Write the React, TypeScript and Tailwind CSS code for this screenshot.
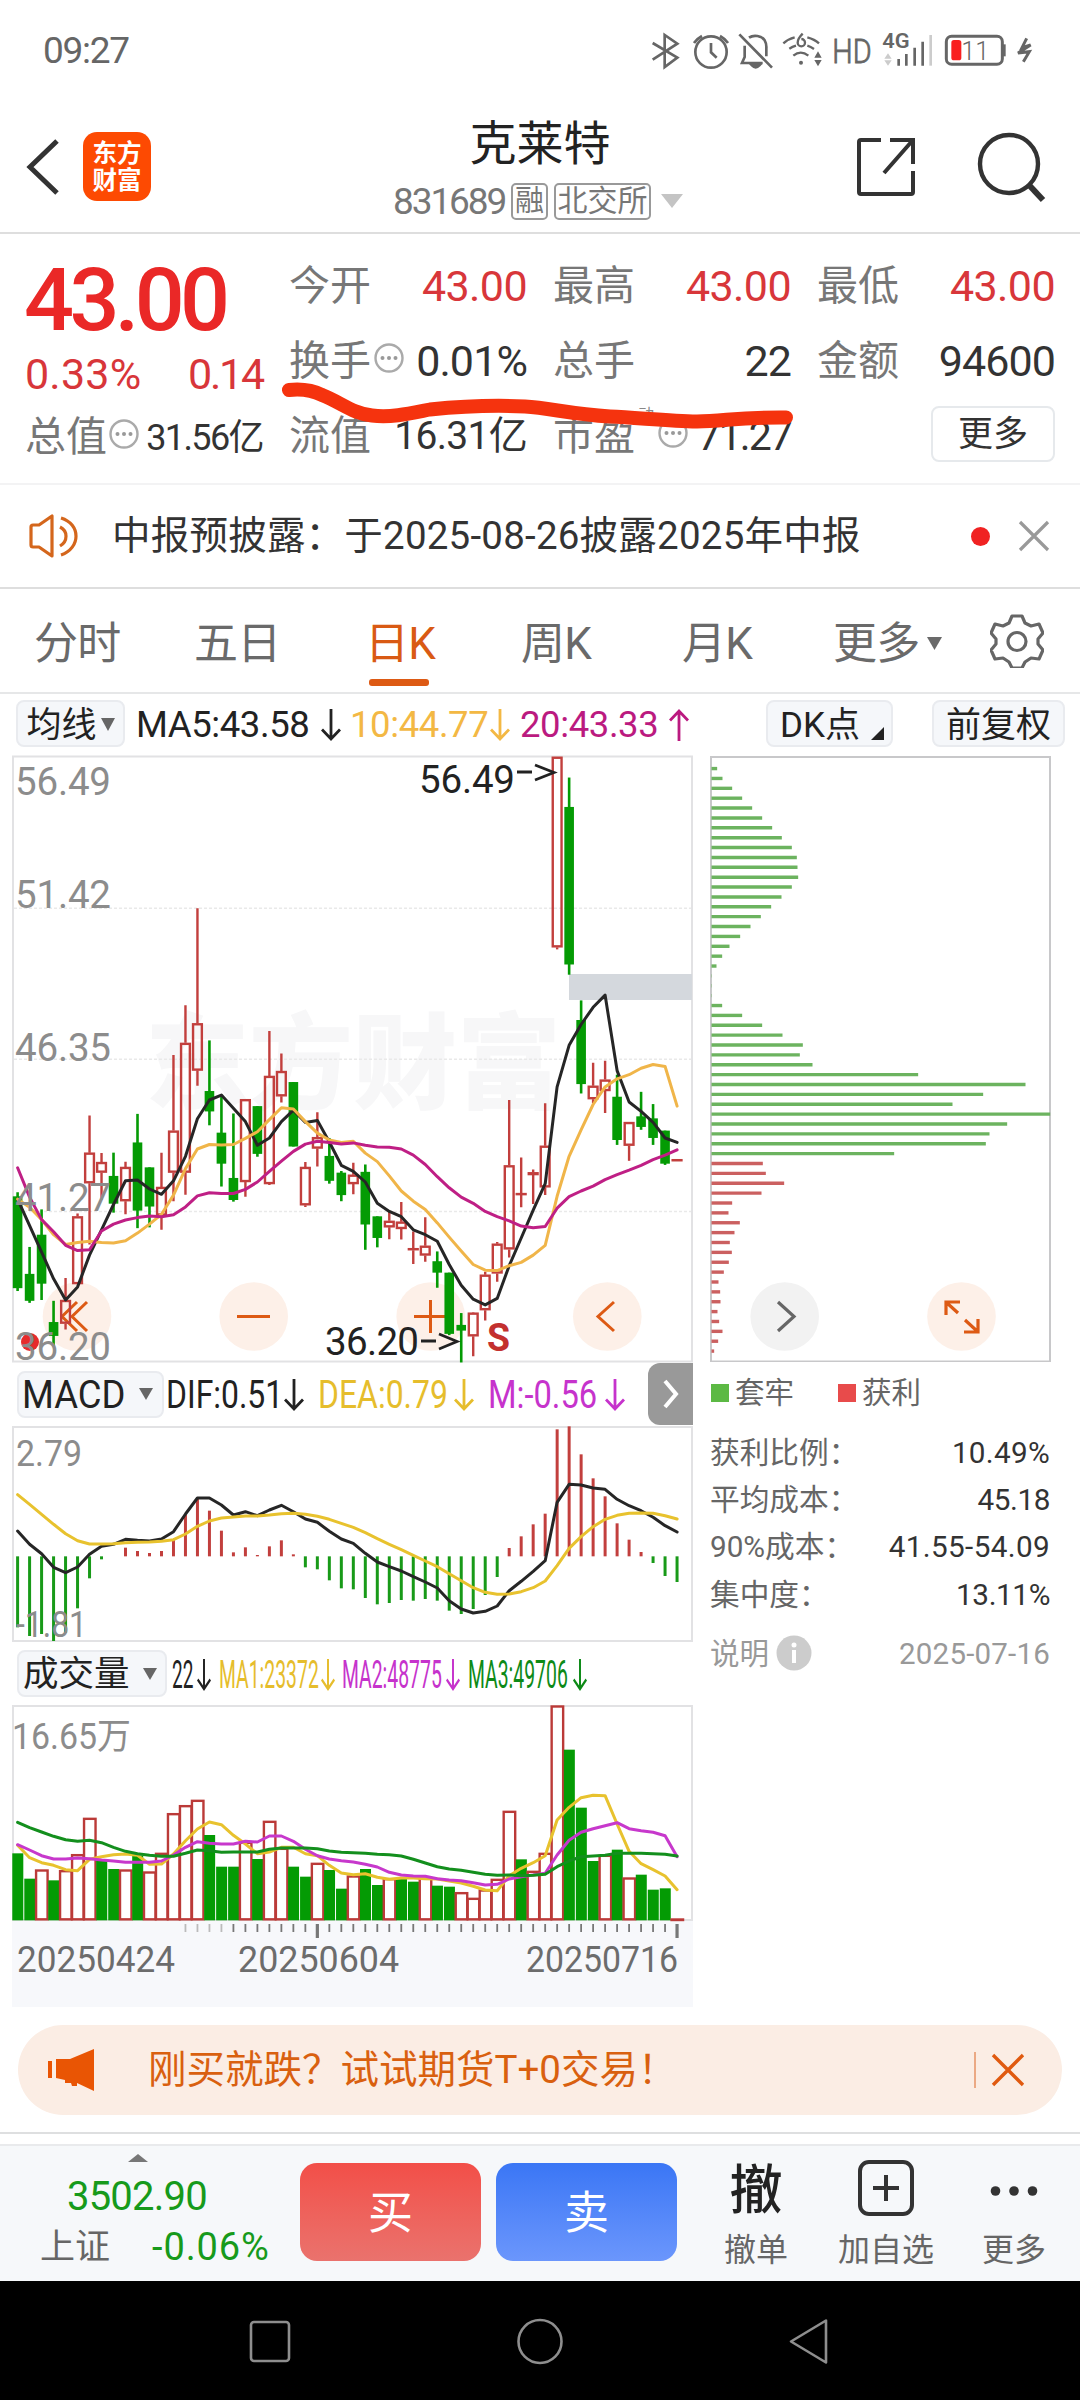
import React from "react";

type Candle = [up: 0 | 1, high: number, top: number, bottom: number, low: number];

const CANDLES: Candle[] = [
  [0, 1108, 1118, 1343, 1350], [0, 1242, 1308, 1374, 1379], [0, 1150, 1212, 1332, 1372], [0, 1374, 1426, 1460, 1485],
  [1, 1318, 1372, 1430, 1444], [1, 1160, 1167, 1333, 1333], [1, 920, 1011, 1086, 1236], [1, 1012, 1034, 1060, 1126],
  [0, 1011, 1068, 1136, 1158], [1, 1033, 1046, 1130, 1162], [0, 916, 986, 1153, 1196], [0, 1047, 1047, 1143, 1194],
  [1, 1011, 1095, 1165, 1200], [1, 772, 957, 1060, 1130], [1, 650, 742, 1060, 1114], [1, 412, 694, 810, 847],
  [0, 736, 860, 910, 944], [0, 872, 962, 1038, 1094], [0, 915, 1073, 1127, 1131], [1, 880, 880, 1083, 1119],
  [0, 897, 897, 1014, 1021], [1, 713, 823, 1088, 1090], [1, 768, 811, 873, 888], [0, 838, 838, 996, 996],
  [1, 1034, 1046, 1140, 1144], [1, 912, 973, 1001, 1045], [0, 975, 1019, 1080, 1087], [0, 1056, 1060, 1115, 1130],
  [1, 1036, 1065, 1088, 1113], [0, 1040, 1058, 1187, 1249], [0, 1167, 1167, 1220, 1243], [1, 1155, 1178, 1194, 1223],
  [1, 1132, 1180, 1198, 1224], [1, 1204, 1245, 1250, 1284], [1, 1169, 1239, 1263, 1278], [0, 1253, 1277, 1305, 1342],
  [0, 1305, 1305, 1455, 1458], [0, 1404, 1433, 1447, 1525], [1, 1402, 1403, 1461, 1510], [1, 1303, 1310, 1397, 1422],
  [1, 1230, 1234, 1307, 1327], [1, 882, 1042, 1248, 1268], [1, 1023, 1110, 1115, 1145], [1, 1052, 1059, 1066, 1137],
  [1, 890, 994, 1096, 1115], [1, 41, 41, 508, 513], [0, 92, 164, 550, 575], [0, 638, 686, 843, 866],
  [1, 791, 847, 880, 890], [1, 786, 832, 860, 914], [0, 820, 874, 980, 992], [1, 936, 936, 994, 1031],
  [0, 862, 922, 948, 955], [0, 892, 927, 975, 992], [0, 957, 957, 1038, 1041], [1, 1027, 1027, 1029, 1029],
];
const MA5 = [1125, 1190, 1255, 1320, 1372, 1340, 1262, 1200, 1138, 1080, 1078, 1100, 1113, 1080, 1020, 928, 882, 870, 902, 935, 993, 975, 935, 907, 937, 932, 985, 1042, 1057, 1083, 1135, 1155, 1168, 1200, 1212, 1228, 1285, 1336, 1370, 1384, 1368, 1288, 1220, 1152, 1087, 850, 748, 697, 655, 625, 810, 887, 910, 937, 975, 986];
const MA10 = [1125, 1145, 1175, 1212, 1236, 1231, 1228, 1231, 1232, 1227, 1208, 1186, 1162, 1115, 1050, 1002, 991, 992, 991, 976, 960, 930, 901, 904, 935, 963, 980, 986, 983, 1012, 1033, 1068, 1105, 1130, 1150, 1183, 1218, 1252, 1285, 1299, 1300, 1288, 1280, 1262, 1238, 1118, 1020, 955, 893, 850, 830, 820, 804, 795, 800, 897];
const MA20 = [1048, 1120, 1175, 1205, 1238, 1251, 1249, 1203, 1186, 1176, 1170, 1166, 1168, 1163, 1144, 1117, 1109, 1111, 1111, 1101, 1083, 1057, 1032, 1008, 990, 983, 986, 990, 987, 993, 997, 998, 1002, 1017, 1040, 1070, 1097, 1120, 1135, 1155, 1168, 1178, 1191, 1195, 1192, 1147, 1119, 1105, 1093, 1077, 1065, 1054, 1042, 1028, 1017, 1004];

const MACD_BARS = [802, 828, 822, 843, 818, 745, 655, 598, 589, 563, 573, 579, 573, 539, 465, 417, 452, 512, 577, 562, 585, 559, 541, 583, 622, 628, 661, 685, 688, 714, 733, 729, 720, 722, 717, 722, 752, 762, 747, 705, 651, 564, 529, 493, 461, 208, 199, 283, 355, 409, 490, 539, 576, 609, 648, 666];
const DIF = [513, 553, 581, 622, 638, 621, 583, 559, 553, 538, 541, 543, 537, 515, 462, 414, 414, 435, 465, 455, 467, 450, 436, 455, 477, 487, 514, 537, 550, 580, 606, 620, 633, 650, 666, 684, 722, 747, 759, 754, 738, 692, 664, 634, 602, 427, 373, 375, 384, 388, 418, 437, 452, 472, 497, 516];
const DEA = [404, 433, 463, 493, 521, 542, 552, 552, 551, 548, 547, 546, 544, 539, 522, 499, 483, 474, 471, 468, 468, 465, 461, 460, 463, 469, 478, 490, 502, 518, 536, 553, 569, 586, 603, 620, 641, 662, 683, 697, 703, 702, 695, 683, 663, 617, 565, 530, 500, 478, 466, 460, 459, 460, 467, 477];

const VOL: [0 | 1, number][] = [
  [0, 520], [0, 596], [1, 570], [0, 601], [1, 572], [1, 524], [1, 415], [0, 540], [0, 567], [1, 570], [0, 527], [1, 576], [1, 520], [1, 401],
  [1, 377], [1, 361], [0, 465], [0, 560], [0, 560], [1, 487], [0, 537], [1, 424], [1, 505], [0, 560], [0, 590], [1, 550], [0, 570], [0, 626],
  [1, 588], [0, 567], [0, 615], [1, 596], [0, 594], [0, 605], [1, 595], [0, 617], [0, 620], [1, 638], [1, 655], [1, 630], [1, 598], [1, 394],
  [0, 538], [1, 574], [1, 520], [1, 78], [0, 209], [0, 383], [0, 543], [1, 526], [0, 509], [1, 594], [0, 584], [0, 629], [0, 625], [1, 717],
];
const VMA1 = [496, 533, 548, 556, 569, 572, 538, 530, 524, 522, 526, 553, 552, 522, 482, 447, 426, 434, 466, 492, 521, 516, 502, 502, 521, 527, 556, 579, 584, 581, 592, 598, 594, 594, 596, 597, 603, 609, 619, 630, 632, 587, 565, 548, 527, 420, 382, 353, 346, 347, 432, 514, 551, 569, 588, 629];
const VMA2 = [494, 510, 527, 537, 537, 534, 536, 540, 543, 547, 547, 547, 543, 525, 502, 485, 490, 492, 492, 484, 486, 468, 468, 484, 508, 527, 537, 542, 546, 553, 561, 577, 585, 588, 589, 596, 600, 602, 608, 615, 613, 597, 590, 585, 580, 525, 481, 457, 446, 437, 428, 446, 452, 457, 467, 530];
const VMA3 = [427, 443, 456, 469, 479, 484, 481, 488, 502, 514, 521, 526, 529, 529, 520, 510, 512, 517, 516, 516, 516, 508, 504, 504, 504, 506, 513, 517, 518, 520, 523, 524, 528, 538, 549, 560, 567, 571, 577, 583, 586, 585, 587, 586, 583, 560, 543, 530, 528, 526, 520, 520, 520, 521, 523, 528];

const CHIPS = [17, 33, 62, 92, 122, 152, 182, 211, 241, 256, 258, 260, 241, 210, 179, 148, 117, 86, 54, 32, 15, 1, 1, 1, 32, 92, 152, 213, 274, 265, 303, 620, 942, 815, 723, 1016, 887, 834, 823, 548, 154, 163, 218, 150, 62, 51, 85, 69, 55, 61, 52, 37, 21, 26, 27, 18, 23, 33, 20, 8];

const dayX = (i: number) => 17.6 + i * 11.99;
const priceY = (v: number) => 740 + v / 2.45;
const macdY = (v: number) => 1360 + v / 3;
const volY = (v: number) => 1680 + v / 3;
const line = (vals: number[], y: (v: number) => number) =>
  vals.map((v, i) => `${dayX(i).toFixed(1)},${y(v).toFixed(1)}`).join(" ");

const RED = "#c23f3d";
const GREEN = "#049b04";

function Curve({ d, y, c }: { d: number[]; y: (v: number) => number; c: string }) {
  return <polyline points={line(d, y)} fill="none" stroke={c} strokeWidth={3} strokeLinejoin="round" strokeLinecap="round" />;
}

function Dots() {
  return (
    <svg className="h-[30px] w-[30px] shrink-0" viewBox="0 0 30 30" fill="none" stroke="#aaa" strokeWidth={2.4}>
      <circle cx="15" cy="15" r="13.5" />
      <g fill="#999" stroke="none">
        <circle cx="8.5" cy="15" r="2" /><circle cx="15" cy="15" r="2" /><circle cx="21.5" cy="15" r="2" />
      </g>
    </svg>
  );
}

function Arrow({ up = false }: { up?: boolean }) {
  return (
    <svg className="h-[34px] w-[20px] shrink-0" viewBox="0 0 20 34" fill="none" stroke="currentColor" strokeWidth={2.8}>
      {up ? <path d="M10 33V3M1 12.5 10 3l9 9.5" /> : <path d="M10 1v30M1 21.5 10 31l9-9.5" />}
    </svg>
  );
}

function Caret({ className }: { className: string }) {
  return (
    <svg className={className} viewBox="0 0 14 13" preserveAspectRatio="none" fill="currentColor"><path d="M0 0h14L7 13z" /></svg>
  );
}

function StatusBar() {
  return (
    <div className="flex h-[101px] shrink-0 items-center pl-[43px] text-[#666]">
      <span className="w-[587px] text-[37px] leading-none tracking-[-1.3px]">09:27</span>
      <svg className="h-[60px] w-[420px]" viewBox="0 0 1260 180" fill="none" stroke="currentColor" strokeWidth={8}>
        <path d="M68 66l74 44-38 28V42l38 26-74 48" strokeLinejoin="miter" />
        <circle cx="243" cy="93" r="47" />
        <path d="M243 66v28l17 16M192 66q8-12 24-21M294 66q-8-12-24-21" />
        <path d="M328 40 426 140M344 74v34l-8 18h62M357 50c14-10 38-6 47 8q6 10 5 24v24" />
        <path d="M366 133h22q-11 12-22 0z" fill="currentColor" />
        <path d="M460 67q14-13 34-18M478 83q9-6 20-9M532 49q22 6 35 18M532 74q10 3 20 10M490 104q22-18 45 0M518 38q-15 15-15 27a11 11 0 1 0 11-11" strokeWidth={7} />
        <circle cx="513" cy="125" r="6" fill="currentColor" stroke="none" />
        <path d="M564 91l11 19h-22zM564 136l-11-19h22z" fill="currentColor" stroke="none" />
        <text x="607" y="125" fontSize="98" fontWeight="300" fill="currentColor" strokeWidth={2.5} textLength="118" lengthAdjust="spacingAndGlyphs">HD</text>
        <text x="757" y="80" fontSize="60" fontWeight="600" fill="currentColor" stroke="none" textLength="82" lengthAdjust="spacingAndGlyphs">4G</text>
        <path d="M806 134v-20M829 134V99M854 134V80M878 134V62" />
        <path d="M902 134V42" stroke="#ccc" />
        <path d="M774 97l11 16h-22zM774 134l-11-16h22z" fill="#ccc" stroke="none" />
        <rect x="949" y="46" width="168" height="84" rx="16" strokeWidth={9} />
        <path d="M1122 70v36" strokeWidth={10} />
        <rect x="964" y="57" width="30" height="61" rx="8" fill="#f91f1f" stroke="none" />
        <text x="994" y="116" fontSize="76" fontWeight="300" fill="currentColor" stroke="none" textLength="84">11</text>
        <path d="M1190 52l-14 28 26-8-38 24 34-4-18 30" strokeWidth={9} />
      </svg>
    </div>
  );
}

function Header() {
  return (
    <div className="grid h-[133px] shrink-0 grid-cols-[393px_294px_1fr] border-b-2 border-[#dedede]">
      <div className="flex items-center pl-[25px]">
        <svg className="h-[58px] w-[36px]" viewBox="0 0 36 58" fill="none" stroke="#333" strokeWidth={5}><path d="M32 3 5 29l27 26" /></svg>
        <div className="ml-[22px] flex h-[69px] w-[68px] flex-col items-center justify-center rounded-[14px] bg-[#fd4a02] text-[24.5px] leading-[27px] font-bold text-white">
          <span>东方</span>
          <span>财富</span>
        </div>
      </div>
      <div className="flex flex-col">
        <div className="mt-[18px] text-center text-[47px] leading-[50px] text-[#222]">克莱特</div>
        <div className="mt-[12px] flex h-[40px] items-center text-[#777]">
          <span className="w-[118px] text-[37px] leading-none tracking-[-2.1px]">831689</span>
          <span className="flex h-[37px] w-[37px] items-center justify-center rounded-[5px] border-2 border-[#999] text-[29px] leading-none">融</span>
          <span className="ml-[6px] flex h-[37px] w-[97px] items-center justify-center rounded-[5px] border-2 border-[#999] text-[30px] leading-none">北交所</span>
          <Caret className="ml-[10px] h-[14px] w-[22px] text-[#c4c4c4]" />
        </div>
      </div>
      <div className="flex items-center">
        <svg className="ml-[168px] h-[62px] w-[62px]" viewBox="0 0 62 62" fill="none" stroke="#333" strokeWidth={4}>
          <path d="M26 4H6q-2 0-2 2v50q0 2 2 2h50q2 0 2-2V35M35 4h23v24M58 4 29 37" />
        </svg>
        <svg className="ml-[58px] h-[72px] w-[72px]" viewBox="0 0 72 72" fill="none" stroke="#333" strokeWidth={4.4}>
          <circle cx="34" cy="33" r="29" /><path d="M54 54 68 69" strokeWidth={6} />
        </svg>
      </div>
    </div>
  );
}

function Cell({ label, value, dots, tone = "text-[43px] tracking-[-0.9px] text-[#333]" }: { label: string; value: string; dots?: boolean; tone?: string }) {
  return (
    <div className="flex h-[75px] items-center justify-between leading-none whitespace-nowrap">
      <span className="flex items-center gap-[3px] text-[41px] text-[#777]">{label}{dots && <span className="-mt-[8px]"><Dots /></span>}</span>
      <span className={tone}>{value}</span>
    </div>
  );
}

function Quote() {
  const red = "text-[43px] tracking-[-0.6px] text-[#d8363a]";
  return (
    <div className="relative grid h-[251px] shrink-0 grid-cols-4 gap-x-[26px] border-b-2 border-[#f3f3f4] px-[25px] pt-[15px]">
      <div>
        <div className="-ml-px flex h-[99px] items-center pt-[3px] text-[88px] leading-none font-medium tracking-[-4.6px] text-[#ea2827]">43.00</div>
        <div className="flex h-[52px] items-center justify-between text-[43px] leading-none text-[#d8363a]">
          <span className="tracking-[0.2px]">0.33%</span><span className="tracking-[-2.2px]">0.14</span>
        </div>
        <div className="flex h-[75px] items-center leading-none whitespace-nowrap text-[#333]">
          <span className="text-[41px] text-[#777]">总值</span>
          <span className="-mt-[8px] ml-[2px]"><Dots /></span>
          <span className="ml-auto text-[36px] tracking-[-1.6px]">31.56亿</span>
        </div>
      </div>
      <div>
        <Cell label="今开" value="43.00" tone={red} />
        <Cell label="换手" value="0.01%" dots />
        <Cell label="流值" value="16.31亿" tone="text-[39px] tracking-[-0.7px] text-[#333]" />
      </div>
      <div>
        <Cell label="最高" value="43.00" tone={red} />
        <Cell label="总手" value="22" />
        <div className="flex h-[75px] items-center leading-none text-[#333]">
          <span className="text-[41px] text-[#777]">市盈</span>
          <span className="mb-[44px] w-[23px] pl-[3px] text-[16px] text-[#888]">动</span>
          <span className="-mt-[8px]"><Dots /></span>
          <span className="ml-auto text-[41px] tracking-[-1.9px]">71.27</span>
        </div>
      </div>
      <div>
        <Cell label="最低" value="43.00" tone={red} />
        <Cell label="金额" value="94600" />
        <div className="flex h-[70px] items-center justify-end">
          <div className="flex h-[56px] w-[124px] items-center justify-center rounded-[8px] border-2 border-[#e6e9ec] text-[35px] leading-none text-[#333]">更多</div>
        </div>
      </div>
      <svg className="absolute top-[140px] left-[270px] h-[60px] w-[540px]" viewBox="270 374 540 60" fill="none" stroke="#f5330e" strokeWidth={14} strokeLinecap="round" strokeLinejoin="round">
        <path d="M289 390Q308 388 322 395C342 403 352 413 372 415.5 392 418 412 413 430 409.5 465 406 495 405 525 406.5 550 408 570 414 610 416.5 640 418 670 421 697 421.5 725 421 740 417 786 417.5" />
      </svg>
    </div>
  );
}

function Notice() {
  return (
    <div className="flex h-[104px] shrink-0 items-center border-b-2 border-[#dedede] pl-[28px]">
      <svg className="h-[46px] w-[54px]" viewBox="0 0 54 46" fill="none" stroke="#d4661c" strokeWidth={3.2} strokeLinejoin="round">
        <path d="M24 3v40L11 34H5q-2 0-2-2V14q0-2 2-2h6zM33 5c20 6 20 30 0 37M32 14c8 4 8 14 0 19" />
      </svg>
      <span className="ml-[30px] w-[859px] pt-px text-[38.5px] leading-none tracking-[0.22px] text-[#333]">中报预披露：于2025-08-26披露2025年中报</span>
      <span className="h-[19px] w-[19px] rounded-full bg-[#f02222]" />
      <svg className="ml-[28px] h-[32px] w-[32px]" viewBox="0 0 32 32" stroke="#999" strokeWidth={3.2}><path d="M2 2l28 28M30 2 2 30" /></svg>
    </div>
  );
}

function Tabs() {
  return (
    <div className="grid h-[105px] shrink-0 grid-cols-[160px_174px_153px_161px_151px_159px_1fr] items-center border-b-2 border-[#e6e7e8] pt-[6px] pl-[34px] text-[44px] leading-none tracking-[-0.8px] text-[#6a6a6a]">
      <span>分时</span>
      <span>五日</span>
      <span className="relative -ml-[3px] text-[#d95a14]">
        日K
        <i className="absolute top-[57px] left-[4px] h-[7px] w-[60px] rounded-[3px] bg-[#dd5a14]" />
      </span>
      <span>周K</span>
      <span>月K</span>
      <span className="flex items-center">更多<Caret className="ml-[8px] h-[13px] w-[15px]" /></span>
      <svg className="-mt-[6px] -ml-[2px] h-[54px] w-[54px]" viewBox="0 0 54 54" fill="none" stroke="#666" strokeWidth={3.2} strokeLinejoin="round">
        <path d="M22 2h10l3 7 6 3 8-2 4 9-5 6v5l5 6-4 9-8-1-6 4-3 6H22l-3-6-6-4-8 1-4-9 5-6v-5L1 19l4-9 8 2 6-3z" />
        <circle cx="27" cy="27.5" r="9" />
      </svg>
    </div>
  );
}

function Toolbar() {
  const pill = "flex h-[47px] items-center rounded-[8px] border-2 border-[#e9ebef] bg-[#f5f7fa] pt-[3px] text-[35px] leading-none text-[#222]";
  return (
    <div className="flex h-[59px] shrink-0 items-center pl-[16px] text-[36.5px] leading-none">
      <div className={pill + " w-[109px] justify-center"}>均线<Caret className="mb-[2px] ml-[4px] h-[13px] w-[14px] text-[#666]" /></div>
      <div className="flex w-[641px] items-center pt-[3px] pl-[11px] tracking-[-0.4px]">
        <span className="flex w-[214px] items-center justify-between pr-[9px] text-[#222]">MA5:43.58<Arrow /></span>
        <span className="flex w-[170px] items-center justify-between pr-[10px] text-[#f3b844]">10:44.77<Arrow /></span>
        <span className="flex w-[169px] items-center justify-between text-[#bb1a80]">20:43.33<Arrow up /></span>
      </div>
      <div className={pill + " w-[127px] pl-[12px]"}>
        DK点
        <svg className="mt-[16px] ml-[11px] h-[13px] w-[13px]" viewBox="0 0 13 13" fill="#222"><path d="M13 0v13H0z" /></svg>
      </div>
      <div className={pill + " ml-[39px] w-[133px] justify-center"}>前复权</div>
    </div>
  );
}

function PriceChart() {
  const labels: [string, number][] = [["56.49", 795], ["51.42", 908], ["46.35", 1061], ["41.27", 1211], ["36.20", 1360]];
  return (
    <svg className="h-[609px] w-[681px] overflow-visible" viewBox="12 753 681 609">
      <rect x="13" y="756.5" width="679" height="605" fill="none" stroke="#e2e2e4" strokeWidth={2} />
      <text x="145" y="1101" fontSize="104" fontWeight="800" fill="#f7f7f8">东方财富</text>
      {[412, 782, 1155].map((v) => (
        <line key={v} x1="14" x2="691" y1={priceY(v)} y2={priceY(v)} stroke="#e9e9e9" strokeWidth={1.5} strokeDasharray="3 2" />
      ))}
      <rect x="569" y="974" width="123" height="26" fill="#d4d8dd" />
      {[77, 253.7, 430.7, 607.3].map((x) => <circle key={x} cx={x} cy="1316.5" r="34.3" fill="#fdf0e8" />)}
      <g fill="none" stroke="#dd5a14" strokeWidth={3}>
        <path d="M77 1302 62 1316.5 77 1331M87 1302 72 1316.5 87 1331M237 1316.5h33M414 1316.5h33M430.5 1300v33M614 1302 598 1316.5 614 1331" />
      </g>
      {CANDLES.map(([up, h, t, b, l], i) => {
        const x = dayX(i);
        const top = priceY(t);
        const bh = Math.max(priceY(b) - top, 1);
        return up ? (
          <g key={i} stroke={RED} strokeWidth={2.4} fill="none">
            <path d={`M${x} ${priceY(h)}V${top}M${x} ${top + bh}V${priceY(l)}`} />
            <rect x={x - 4.4} y={top + 1} width={8.8} height={Math.max(bh - 2, 0.1)} />
          </g>
        ) : (
          <g key={i} fill={GREEN}>
            <rect x={x - 1.3} y={priceY(h)} width={2.6} height={priceY(l) - priceY(h)} />
            <rect x={x - 4.8} y={top} width={9.6} height={bh} />
          </g>
        );
      })}
      <Curve d={MA5} y={priceY} c="#262626" />
      <Curve d={MA10} y={priceY} c="#f0b549" />
      <Curve d={MA20} y={priceY} c="#bf1f85" />
      <circle cx="30" cy="1342" r="9" fill="#e62b2b" />
      <g fontSize="38.5" fill="#8c8c8c">
        {labels.map(([s, y]) => <text key={s} x="15" y={y} textLength="96">{s}</text>)}
      </g>
      <g fontSize="38.5" fill="#222">
        <text x="419" y="793" textLength="96">56.49</text>
        <path d="M517 772h15M535 765l19 7.5-19 7.5" fill="none" stroke="#222" strokeWidth={2.8} />
        <text x="325" y="1355" textLength="94">36.20</text>
        <path d="M421 1341h15M439 1334l18 7.5-18 7.5" fill="none" stroke="#222" strokeWidth={2.8} />
      </g>
      <text x="487" y="1351" fontSize="39" fontWeight="700" fill="#c3302f" textLength="23" lengthAdjust="spacingAndGlyphs">S</text>
    </svg>
  );
}

function MacdHeader() {
  return (
    <div className="flex h-[64px] items-center pl-[5px] text-[38px] leading-none">
      <div className="flex h-[47px] w-[147px] shrink-0 items-center rounded-[8px] border-2 border-[#e9ebef] bg-[#f5f7fa] pt-[2px] pl-[3px] text-[#222]">
        <span className="w-[103px] origin-left scale-x-[0.960]">MACD</span><Caret className="mb-[2px] ml-[14px] h-[12px] w-[14px] shrink-0 text-[#666]" />
      </div>
      <div className="flex w-[484px] items-center pt-[2px] pl-[2px]">
        <span className="flex w-[138px] items-center justify-between text-[#222]"><span className="w-[114px] origin-left scale-x-[0.840]">DIF:0.51</span><Arrow /></span>
        <span className="ml-[14px] flex w-[156px] items-center justify-between text-[#e6bd2c]"><span className="w-[128px] origin-left scale-x-[0.840]">DEA:0.79</span><Arrow /></span>
        <span className="ml-[14px] flex w-[137px] items-center justify-between text-[#c633cc]"><span className="w-[110px] origin-left scale-x-[0.860]">M:-0.56</span><Arrow /></span>
      </div>
      <div className="flex h-[62px] w-[45px] items-center justify-center rounded-l-[12px] bg-[#999]">
        <svg className="h-[30px] w-[18px]" viewBox="0 0 18 30" fill="none" stroke="#fff" strokeWidth={4}><path d="M3 2l11 13L3 28" /></svg>
      </div>
    </div>
  );
}

function MacdChart() {
  return (
    <svg className="h-[216px] w-[681px] overflow-visible" viewBox="12 1426 681 216">
      <rect x="13" y="1427" width="679" height="214" fill="none" stroke="#e2e2e4" strokeWidth={2} />
      {MACD_BARS.map((v, i) => (
        <line key={i} x1={dayX(i)} x2={dayX(i)} y1={macdY(589)} y2={macdY(v)} stroke={v < 589 ? RED : "#189a18"} strokeWidth={3} />
      ))}
      <Curve d={DIF} y={macdY} c="#262626" />
      <Curve d={DEA} y={macdY} c="#e8c22e" />
      <g fontSize="37" fill="#8c8c8c">
        <text x="16" y="1466" textLength="66" lengthAdjust="spacingAndGlyphs">2.79</text>
        <text x="16" y="1637" textLength="71" lengthAdjust="spacingAndGlyphs">-1.81</text>
      </g>
    </svg>
  );
}

function VolumeHeader() {
  const items: [string, string, string][] = [
    ["MA1:23372", "w-[123px] text-[#e6bd2c]", "w-[99px]"],
    ["MA2:48775", "w-[126px] text-[#c633cc]", "w-[101px]"],
    ["MA3:49706", "w-[121px] text-[#0d8a17]", "w-[102px]"],
  ];
  return (
    <div className="flex h-[63px] items-center pl-[5px] text-[38px] leading-none">
      <div className="flex h-[47px] w-[150px] shrink-0 items-center rounded-[8px] border-2 border-[#e9ebef] bg-[#f5f7fa] pt-[2px] pl-[4px] text-[35.5px] text-[#222]">
        成交量<Caret className="mb-[2px] ml-[13px] h-[12px] w-[14px] text-[#666]" />
      </div>
      <span className="ml-[5px] flex w-[47px] items-center pt-[2px] text-[#222]"><span className="w-[22px] origin-left scale-x-[0.500]">22</span><span className="scale-x-[0.700]"><Arrow /></span></span>
      {items.map(([t, c, w]) => (
        <span key={t} className={"flex items-center pt-[2px] " + c}>
          <span className={"shrink-0 origin-left scale-x-[0.510] " + w}>{t}</span>
          <span className="scale-x-[0.700]"><Arrow /></span>
        </span>
      ))}
    </div>
  );
}

function VolumeChart() {
  const base = volY(718);
  return (
    <svg className="h-[302px] w-[681px]" viewBox="12 1705 681 302">
      <rect x="12" y="1921" width="681" height="86" fill="#f7f8fb" />
      <rect x="13" y="1706" width="679" height="214" fill="none" stroke="#e2e2e4" strokeWidth={2} />
      {VOL.map(([up, v], i) =>
        up ? (
          <rect key={i} x={dayX(i) - 5.5} y={volY(v) + 0.5} width={11.5} height={Math.max(base - volY(v) - 0.5, 0.5)} fill="#fff" stroke="#bb3a38" strokeWidth={2.4} />
        ) : (
          <rect key={i} x={dayX(i) - 5.3} y={volY(v)} width={11} height={base - volY(v) + 1} fill={GREEN} />
        ),
      )}
      <Curve d={VMA1} y={volY} c="#e8c22e" />
      <Curve d={VMA2} y={volY} c="#c738cc" />
      <Curve d={VMA3} y={volY} c="#138f1d" />
      {Array.from({ length: 42 }, (_, k) => k + 14).map((i) => (
        <line key={i} x1={dayX(i)} x2={dayX(i)} y1="1924" y2={i === 25 || i === 55 ? 1938 : 1932} stroke={i < 18 ? "#bbb" : "#777"} strokeWidth={i === 25 || i === 55 ? 3.2 : 1.8} />
      ))}
      <text x="12" y="1749" fontSize="36" fill="#8c8c8c" textLength="119" lengthAdjust="spacingAndGlyphs">16.65万</text>
      <g fontSize="36" fill="#6c6c6c">
        <text x="17" y="1972" textLength="158" lengthAdjust="spacingAndGlyphs">20250424</text>
        <text x="238" y="1972" textLength="161" lengthAdjust="spacingAndGlyphs">20250604</text>
        <text x="526" y="1972" textLength="152" lengthAdjust="spacingAndGlyphs">20250716</text>
      </g>
    </svg>
  );
}

function ChipPanel() {
  const rows = [
    ["获利比例：", "10.49%", "tracking-[0.3px]"],
    ["平均成本：", "45.18", "tracking-[-0.4px]"],
    ["90%成本：", "41.55-54.09", "tracking-[0.35px]"],
    ["集中度：", "13.11%", "tracking-[-0.4px]"],
  ];
  return (
    <div className="w-[341px]">
      <svg className="h-[609px] w-[341px]" viewBox="710 753 341 609">
        <rect x="711" y="757" width="339" height="604.5" fill="none" stroke="#c8c8ca" strokeWidth={2} />
        {CHIPS.map((w, k) => {
          const y = priceY(70 + k * 24.19);
          return <line key={k} x1="711.5" x2={711.5 + w / 3} y1={y} y2={y} stroke={k < 40 ? "#6cb35f" : "#cb6060"} strokeWidth={3.4} />;
        })}
        <circle cx="784.7" cy="1316.5" r="34.3" fill="#f2f2f2" />
        <circle cx="961.5" cy="1316.5" r="34.3" fill="#fdf0e8" />
        <path d="M778 1302l16 14.5-16 14.5" fill="none" stroke="#666" strokeWidth={3.2} />
        <path d="M946 1315v-13h14M947 1303l11 10M978 1319v13h-14M977 1331l-12-11" fill="none" stroke="#dd5a14" strokeWidth={3.2} />
      </svg>
      <div className="flex h-[62px] items-center text-[29.5px] leading-none text-[#666]">
        <i className="ml-px h-[18px] w-[18px] bg-[#5cb944]" /><span className="ml-[6px] w-[103px] pt-[2px]">套牢</span>
        <i className="h-[18px] w-[18px] bg-[#e84b4b]" /><span className="ml-[6px] pt-[2px]">获利</span>
      </div>
      <div className="mt-[5px]">
        {rows.map(([a, b, spacing]) => (
          <div key={a} className="flex h-[47.3px] items-center justify-between pr-[1px] text-[29.7px] leading-none">
            <span className="whitespace-nowrap text-[#666]">{a}</span>
            <span className={"text-[#333] " + spacing}>{b}</span>
          </div>
        ))}
      </div>
      <div className="mt-[10px] flex h-[50px] items-center pr-[1px] text-[29.5px] leading-none text-[#999]">
        <span className="pt-[3px]">说明</span>
        <svg className="ml-[7px] h-[36px] w-[36px]" viewBox="0 0 36 36"><circle cx="18" cy="18" r="17.5" fill="#ccc" /><path d="M18 15v13" stroke="#fff" strokeWidth={4} /><circle cx="18" cy="10" r="2.5" fill="#fff" /></svg>
        <span className="ml-auto pt-[3px] tracking-[0.2px]">2025-07-16</span>
      </div>
    </div>
  );
}

function Promo() {
  return (
    <div className="mx-[18px] mt-[18px] flex h-[90px] shrink-0 items-center rounded-full bg-[#fbede4] pl-[29px] text-[#d9600f]">
      <svg className="h-[42px] w-[48px]" viewBox="0 0 48 42" fill="#e95504"><path d="M1 12h4v17H1zM9 10h14L47 0v42l-17-8v3h-5l-1-3h-6v-3l-9-2z" /></svg>
      <span className="ml-[53px] w-[826px] pt-px text-[38.5px] leading-none">刚买就跌？试试期货T+0交易！</span>
      <i className="h-[36px] w-[2px] bg-[#eba984]" />
      <svg className="ml-[15px] h-[34px] w-[34px]" viewBox="0 0 34 34" stroke="#e05a10" strokeWidth={3.4}><path d="M2 2l30 30M32 2 2 32" /></svg>
    </div>
  );
}

function Footer() {
  return (
    <div className="flex h-[137px] shrink-0 border-t-2 border-[#e9eaec] bg-[#f6f8fa] leading-none">
      <div className="flex w-[300px] flex-col">
        <svg className="mt-[8px] ml-[128px] h-[8px] w-[20px]" viewBox="0 0 20 8" fill="#777"><path d="M10 0 20 8H0z" /></svg>
        <span className="mt-[15px] ml-[67px] text-[40px] tracking-[-0.8px] text-[#179a1b]">3502.90</span>
        <div className="mt-[11px] flex items-center">
          <span className="ml-[40px] w-[112px] text-[35px] text-[#666]">上证</span>
          <span className="text-[38px] tracking-[0.9px] text-[#179a1b]">-0.06%</span>
        </div>
      </div>
      <div className="mt-[17px] flex h-[98px] w-[181px] items-center justify-center rounded-[17px] bg-linear-to-b from-[#f24e48] to-[#ea726d] pt-[3px] text-[45px] text-white">买</div>
      <div className="mt-[17px] ml-[15px] flex h-[98px] w-[181px] items-center justify-center rounded-[17px] bg-linear-to-b from-[#3a76f5] to-[#6b96fc] pt-[3px] text-[45px] text-white">卖</div>
      <div className="flex w-[403px] pt-[17px] text-[32px] text-[#666]">
        <div className="ml-[37px] flex w-[84px] flex-col items-center">
          <span className="h-[56px] pt-[2px] text-[53px] font-medium text-[#222]">撤</span>
          <span className="mt-[15px]">撤单</span>
        </div>
        <div className="ml-[38px] flex w-[100px] flex-col items-center">
          <svg className="-mt-[4px] h-[59px] w-[56px]" viewBox="0 0 56 59" fill="none" stroke="#333" strokeWidth={4}>
            <rect x="2" y="3" width="52" height="52" rx="9" /><path d="M28 16v26M15 29h26" />
          </svg>
          <span className="mt-[16px] whitespace-nowrap">加自选</span>
        </div>
        <div className="ml-[34px] flex w-[88px] flex-col items-center">
          <svg className="h-[56px] w-[56px]" viewBox="0 0 56 56" fill="#333"><circle cx="9.5" cy="28" r="4.8" /><circle cx="28" cy="28" r="4.8" /><circle cx="46.5" cy="28" r="4.8" /></svg>
          <span className="mt-[15px]">更多</span>
        </div>
      </div>
    </div>
  );
}

export default function App() {
  return (
    <div className="flex h-[2400px] w-[1080px] flex-col overflow-hidden bg-white font-[Roboto,'Noto_Sans_CJK_SC',sans-serif]">
      <StatusBar />
      <Header />
      <Quote />
      <Notice />
      <Tabs />
      <Toolbar />
      <div className="flex shrink-0 pl-[12px]">
        <div className="flex w-[681px] flex-col">
          <PriceChart />
          <MacdHeader />
          <MacdChart />
          <VolumeHeader />
          <VolumeChart />
        </div>
        <div className="ml-[17px]"><ChipPanel /></div>
      </div>
      <Promo />
      <div className="mt-[17px] mb-[10px] h-[2px] shrink-0 bg-[#dedfe0]" />
      <Footer />
      <div className="flex flex-1 items-center justify-center bg-black">
        <svg className="h-[50px] w-[620px]" viewBox="230 2315 620 50" fill="none" stroke="#8e8e8e" strokeWidth={2.6} strokeLinejoin="round">
          <rect x="251" y="2321" width="38" height="39" rx="3" />
          <circle cx="540" cy="2340.5" r="21.5" />
          <path d="M826 2319.5v42L791 2340.5z" />
        </svg>
      </div>
    </div>
  );
}
